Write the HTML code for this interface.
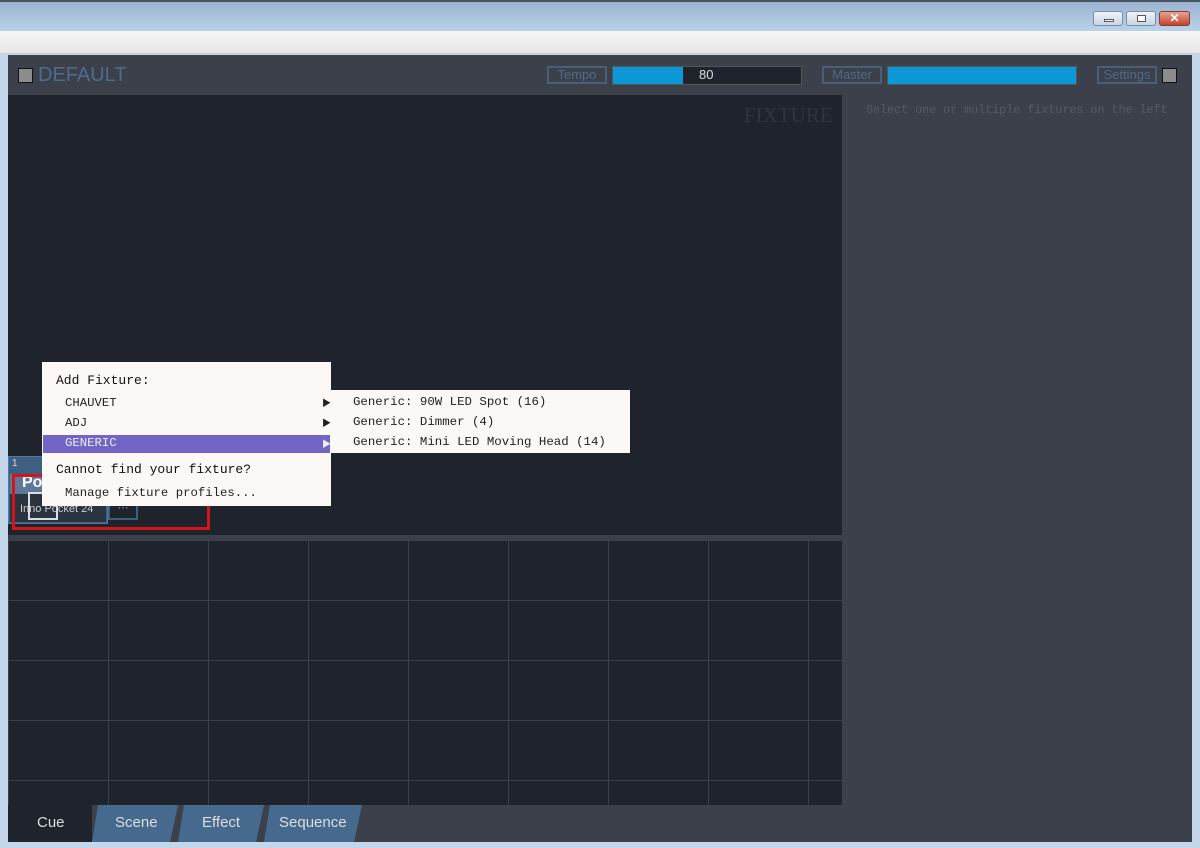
<!DOCTYPE html>
<html><head><meta charset="utf-8"><style>
*{margin:0;padding:0;box-sizing:border-box}
body{width:1200px;height:848px;overflow:hidden;background:#c3d6ea;font-family:"Liberation Sans",sans-serif;position:relative}
.abs{position:absolute}
.mono{font-family:"Liberation Mono","Noto Serif CJK SC",monospace}
</style></head><body>
<div class="abs" style="left:0;top:0;width:1200px;height:2px;background:#4a5560"></div>
<div class="abs" style="left:0;top:2px;width:1200px;height:29px;background:linear-gradient(#9ab4d2,#b9d2ea)"></div>
<div class="abs" style="left:1093px;top:11px;width:30px;height:15px;border:1px solid #7d8ea3;border-radius:3px;background:linear-gradient(#eef3f8,#c8d5e3)"><div class="abs" style="left:10px;top:7px;width:10px;height:3px;border:1px solid #556;background:#fff"></div></div>
<div class="abs" style="left:1126px;top:11px;width:30px;height:15px;border:1px solid #7d8ea3;border-radius:3px;background:linear-gradient(#eef3f8,#c8d5e3)"><div class="abs" style="left:10px;top:3px;width:9px;height:7px;border:1px solid #556;background:#fff"></div></div>
<div class="abs" style="left:1159px;top:11px;width:31px;height:15px;border:1px solid #8a3a30;border-radius:3px;background:linear-gradient(#e6a493,#c4432e);color:#fff;font-size:12px;font-weight:bold;text-align:center;line-height:13px">✕</div>
<div class="abs" style="left:0;top:31px;width:1200px;height:23px;background:linear-gradient(#f6f6f6,#e6e6e6);border-bottom:1px solid #c9ccd4"></div>
<div class="abs" style="left:8px;top:55px;width:1184px;height:787px;background:#3c404b"></div>
<div class="abs" style="left:18px;top:68px;width:15px;height:15px;background:#8c8c8c;border:1px solid #111"></div>
<div class="abs" style="left:38px;top:64px;font-size:20px;color:#4e6b8c">DEFAULT</div>
<div class="abs" style="left:547px;top:66px;width:60px;height:18px;border:2px solid #4a5e77;color:#4e6b8c;font-size:13px;text-align:center;line-height:14px">Tempo</div>
<div class="abs" style="left:612px;top:66px;width:190px;height:19px;background:#1f242c;border:1px solid #555"></div>
<div class="abs" style="left:613px;top:67px;width:70px;height:17px;background:#0c97d6"></div>
<div class="abs" style="left:699px;top:67px;font-size:13px;color:#ddd">80</div>
<div class="abs" style="left:822px;top:66px;width:60px;height:18px;border:2px solid #4a5e77;color:#4e6b8c;font-size:13px;text-align:center;line-height:14px">Master</div>
<div class="abs" style="left:887px;top:66px;width:190px;height:19px;background:#0c97d6;border:1px solid #555"></div>
<div class="abs" style="left:1097px;top:66px;width:60px;height:18px;border:2px solid #4a5e77;color:#4e6b8c;font-size:13px;text-align:center;line-height:14px">Settings</div>
<div class="abs" style="left:1162px;top:68px;width:15px;height:15px;background:#8c8c8c;border:1px solid #111"></div>
<div class="abs" style="left:8px;top:95px;width:834px;height:440px;background:#1f242c"></div>
<div class="abs" style="left:744px;top:103px;font-family:'Liberation Serif',serif;font-size:21px;color:#2f3540">FIXTURE</div>
<div class="abs mono" style="left:866px;top:103px;font-size:11.7px;color:#555b66">Select one or multiple fixtures on the left</div>
<div class="abs" style="left:8px;top:541px;width:834px;height:264px;background:#1f242c;
background-image:linear-gradient(90deg,#3a3f48 1px,transparent 1px),linear-gradient(#3a3f48 1px,transparent 1px);background-size:100px 60px;background-position:100px 0,0 59px"></div>
<div class="abs" style="left:8px;top:456px;width:100px;height:68px;background:#3e5f80;border:1px solid #4c7aa6"></div>
<div class="abs" style="left:12px;top:458px;font-size:10px;color:#ddd">1</div>
<div class="abs" style="left:10px;top:474px;width:96px;height:20px;background:#5d7898;color:#fff;font-weight:bold;font-size:16px;padding-left:12px">Po</div>
<div class="abs" style="left:10px;top:494px;width:96px;height:28px;background:#2a3340"></div>
<div class="abs" style="left:20px;top:503px;font-size:11px;color:#ccc">Inno Pocket 24</div>
<div class="abs" style="left:28px;top:492px;width:30px;height:28px;border:2px solid #ddd"></div>
<div class="abs" style="left:108px;top:500px;width:30px;height:20px;border:2px solid #40607e;color:#aaa;font-size:11px;text-align:center">···</div>
<div class="abs" style="left:12px;top:474px;width:198px;height:56px;border:3px solid #d0161b"></div>
<div class="abs mono" style="left:42px;top:362px;width:289px;height:144px;background:#fcf8f6;font-size:12.3px;color:#222">
<div class="abs" style="left:14px;top:11px;font-size:13px;color:#111">Add Fixture:</div>
<div class="abs" style="left:23px;top:34px">CHAUVET</div><div class="abs" style="left:280px;top:34px;font-size:9px">▶</div>
<div class="abs" style="left:23px;top:54px">ADJ</div><div class="abs" style="left:280px;top:54px;font-size:9px">▶</div>
<div class="abs" style="left:1px;top:73px;width:287px;height:18px;background:#7165c6;color:#eee;padding:1px 0 0 22px">GENERIC<span class="abs" style="left:279px;top:2px;font-size:9px">▶</span></div>
<div class="abs" style="left:14px;top:100px;font-size:13px;color:#111">Cannot find your fixture?</div>
<div class="abs" style="left:23px;top:124px">Manage fixture profiles...</div>
</div>
<div class="abs mono" style="left:331px;top:390px;width:299px;height:63px;background:#fcf8f6;font-size:12.4px;color:#222">
<div class="abs" style="left:22px;top:5px">Generic: 90W LED Spot (16)</div>
<div class="abs" style="left:22px;top:25px">Generic: Dimmer (4)</div>
<div class="abs" style="left:22px;top:45px">Generic: Mini LED Moving Head (14)</div>
</div>
<div class="abs" style="left:8px;top:805px;width:834px;height:37px;background:#3c404b"></div>
<div class="abs" style="left:8px;top:805px;width:84px;height:37px;background:#1f242c"></div>
<div class="abs" style="left:37px;top:814px;font-size:15px;color:#ddd">Cue</div>
<div class="abs" style="left:92px;top:805px;width:86px;height:37px;background:#466a8e;clip-path:polygon(6px 0,100% 0,calc(100% - 8px) 100%,0 100%)"></div>
<div class="abs" style="left:115px;top:814px;font-size:15px;color:#ddd">Scene</div>
<div class="abs" style="left:178px;top:805px;width:86px;height:37px;background:#466a8e;clip-path:polygon(6px 0,100% 0,calc(100% - 8px) 100%,0 100%)"></div>
<div class="abs" style="left:202px;top:814px;font-size:15px;color:#ddd">Effect</div>
<div class="abs" style="left:264px;top:805px;width:98px;height:37px;background:#466a8e;clip-path:polygon(6px 0,100% 0,calc(100% - 8px) 100%,0 100%)"></div>
<div class="abs" style="left:279px;top:814px;font-size:15px;color:#ddd">Sequence</div>
</body></html>
